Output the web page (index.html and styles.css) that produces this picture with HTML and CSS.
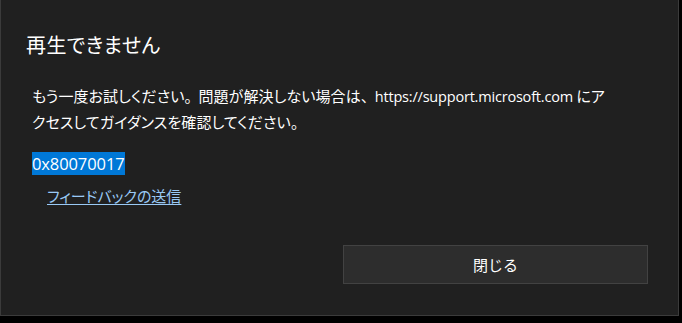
FILE: index.html
```html
<!DOCTYPE html>
<html lang="ja">
<head>
<meta charset="utf-8">
<link rel="stylesheet" href="styles.css">
</head>
<body>
<div class="dialog">
  <h1 class="title">再生できません</h1>
  <div class="content">
    <p class="message">もう一度お試しください<span class="punct">。</span>問題が解決しない場合は<span class="punct">、</span><span class="latin">https://support.microsoft.com</span> にア<br>クセスしてガイダンスを確認してください。</p>
    <div class="code"><span class="selected">0x80070017</span></div>
    <a class="feedback" href="#">フィードバックの送信</a>
  </div>
  <div class="actions">
    <button class="close">閉じる</button>
  </div>
</div>
</body>
</html>
```
FILE: styles.css
```css
html, body {
  margin: 0;
  padding: 0;
  background: #000;
}
body {
  width: 682px;
  height: 323px;
  overflow: hidden;
  font-family: "Noto Sans CJK JP", "Noto Sans", sans-serif;
  color: #fff;
  font-feature-settings: "palt" 1;
}
.dialog {
  box-sizing: border-box;
  width: 679px;
  height: 316px;
  background: #202020;
  border: 1px solid #3b3b3b;
  border-top: 0;
  display: flex;
  flex-direction: column;
}
.title {
  margin: 31px 0 0 25px;
  font-size: 20px;
  font-weight: 400;
  line-height: 28px;
  letter-spacing: 0.4px;
}
.content {
  padding-left: 31px;
  display: flex;
  flex-direction: column;
  align-items: flex-start;
}
.message {
  margin: 24px 0 0 0;
  font-size: 15px;
  line-height: 25px;
  letter-spacing: 0.1px;
  white-space: nowrap;
}
.punct {
  font-feature-settings: normal;
  letter-spacing: -1px;
}
.latin {
  font-family: "Open Sans", "Noto Sans", sans-serif;
  font-size: 14.5px;
  letter-spacing: -0.2px;
}
.code {
  margin-top: 18px;
  font-size: 16px;
  line-height: 22px;
}
.selected {
  background: #0078d7;
  color: #fff;
  font-family: "Open Sans", "Noto Sans", sans-serif;
  font-size: 16.5px;
  letter-spacing: -0.1px;
}
.feedback {
  margin: 10px 0 0 15px;
  font-size: 15px;
  line-height: 22px;
  color: #99c9f5;
  text-decoration: underline;
  text-underline-offset: 2px;
  letter-spacing: 0;
}
.actions {
  display: flex;
  justify-content: flex-end;
  padding-right: 30px;
  margin-top: auto;
  margin-bottom: 31px;
}
.close {
  box-sizing: border-box;
  width: 305px;
  height: 39px;
  background: #2d2d2d;
  border: 1px solid #424242;
  color: #fff;
  font-family: "Noto Sans CJK JP", sans-serif;
  font-size: 15px;
  padding: 0;
}
```
